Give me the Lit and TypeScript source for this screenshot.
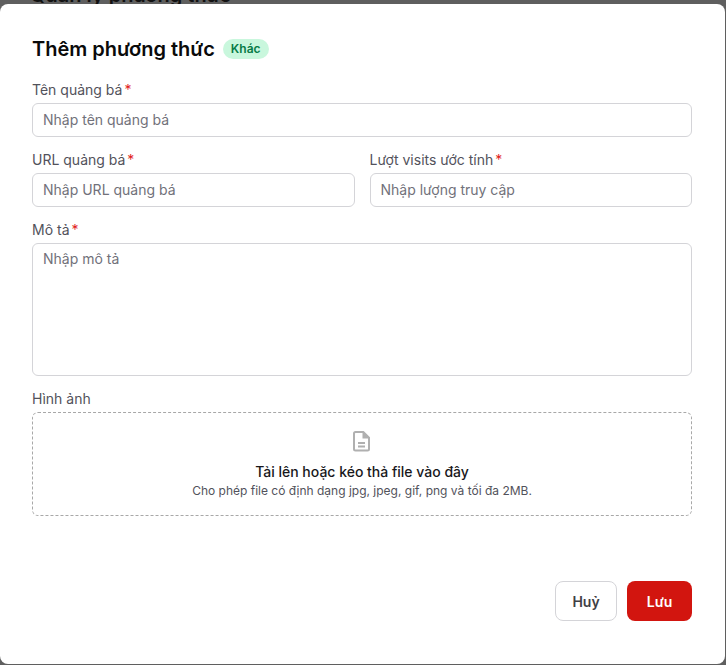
import { LitElement, html, css } from "lit";
import { customElement } from "lit/decorators.js";

@customElement("app-root")
export class AppRoot extends LitElement {
  static styles = css`
    :host {
      display: block;
      width: 726px;
      height: 665px;
      overflow: hidden;
      position: relative;
      background: #5f5f5f;
      font-family: Inter, "Noto Sans", sans-serif;
      color: #52525b;
    }
    .behind {
      position: absolute;
      left: 30px;
      top: -17px;
      font-size: 20px;
      line-height: 24px;
      font-weight: 600;
      color: #111;
      margin: 0;
    }
    .modal {
      position: absolute;
      left: 0;
      top: 4px;
      width: 725px;
      height: 660px;
      box-sizing: border-box;
      background: #fff;
      border-radius: 8px;
      padding: 32px 33px 43px 32px;
      display: flex;
      flex-direction: column;
    }
    .head {
      display: flex;
      align-items: center;
      gap: 8px;
      height: 26px;
      margin-bottom: 19px;
    }
    h2 {
      margin: 0;
      font-size: 20px;
      line-height: 26px;
      font-weight: 600;
      color: #0a0a0a;
    }
    .chip {
      height: 20px;
      padding: 0 8px;
      border-radius: 10px;
      background: #c9f7dd;
      color: #067a46;
      font-size: 12px;
      line-height: 20px;
      font-weight: 600;
    }
    .grid {
      display: grid;
      grid-template-columns: 1fr 1fr;
      column-gap: 15px;
      row-gap: 14px;
    }
    .field {
      display: flex;
      flex-direction: column;
      gap: 4px;
      min-width: 0;
    }
    .full { grid-column: 1 / -1; }
    label {
      font-size: 14px;
      line-height: 18px;
      color: #52525b;
      display: flex;
      gap: 2px;
    }
    label i { color: #e11d1d; font-style: normal; }
    .input {
      height: 32px;
      box-sizing: content-box;
      border: 1px solid #d4d4d8;
      border-radius: 6px;
      padding: 0 10px;
      font-size: 14px;
      line-height: 32px;
      color: #71717a;
    }
    .area {
      height: 131px;
      line-height: 20px;
      padding-top: 5px;
      height: 126px;
    }
    .drop {
      height: 102px;
      border: 1px dashed #a8a8a8;
      border-radius: 6px;
      display: flex;
      flex-direction: column;
      align-items: center;
    }
    .drop svg { margin-top: 16px; display: block; }
    .drop b {
      margin-top: 10px;
      font-size: 14px;
      line-height: 18px;
      font-weight: 500;
      color: #18181b;
    }
    .drop small {
      margin-top: 2px;
      font-size: 12px;
      line-height: 16px;
      color: #52525b;
    }
    .foot {
      margin-top: auto;
      display: flex;
      justify-content: flex-end;
      gap: 10px;
    }
    button {
      height: 40px;
      box-sizing: border-box;
      border-radius: 8px;
      font: 600 14px Inter, sans-serif;
      padding: 0;
    }
    .cancel {
      width: 62px;
      background: #fff;
      border: 1px solid #d4d4d8;
      color: #3f3f46;
    }
    .save {
      width: 65px;
      background: #d2150f;
      border: 0;
      color: #fff;
    }
  `;

  render() {
    return html`
      <p class="behind">Quản lý phương thức</p>
      <div class="modal">
        <div class="head">
          <h2>Thêm phương thức</h2>
          <span class="chip">Khác</span>
        </div>
        <div class="grid">
          <div class="field full">
            <label>Tên quảng bá<i>*</i></label>
            <div class="input">Nhập tên quảng bá</div>
          </div>
          <div class="field">
            <label>URL quảng bá<i>*</i></label>
            <div class="input">Nhập URL quảng bá</div>
          </div>
          <div class="field">
            <label>Lượt visits ước tính<i>*</i></label>
            <div class="input">Nhập lượng truy cập</div>
          </div>
          <div class="field full">
            <label>Mô tả<i>*</i></label>
            <div class="input area">Nhập mô tả</div>
          </div>
          <div class="field full">
            <label>Hình ảnh</label>
            <div class="drop">
              <svg width="24" height="24" viewBox="0 0 24 24" fill="#b0b0b0">
                <path fill-rule="evenodd" d="M5.5 2h8.2L20 8.3V20a2.5 2.5 0 0 1-2.5 2.5h-12A2.5 2.5 0 0 1 3 20V4.5A2.5 2.5 0 0 1 5.5 2Zm0 2a.5.5 0 0 0-.5.5V20a.5.5 0 0 0 .5.5h12a.5.5 0 0 0 .5-.5V9.5h-5.5V4H5.5ZM8 13h7v2H8v-2Zm0 3.5h7v2H8v-2Z"/>
              </svg>
              <b>Tải lên hoặc kéo thả file vào đây</b>
              <small>Cho phép file có định dạng jpg, jpeg, gif, png và tối đa 2MB.</small>
            </div>
          </div>
        </div>
        <div class="foot">
          <button class="cancel">Huỷ</button>
          <button class="save">Lưu</button>
        </div>
      </div>
    `;
  }
}
